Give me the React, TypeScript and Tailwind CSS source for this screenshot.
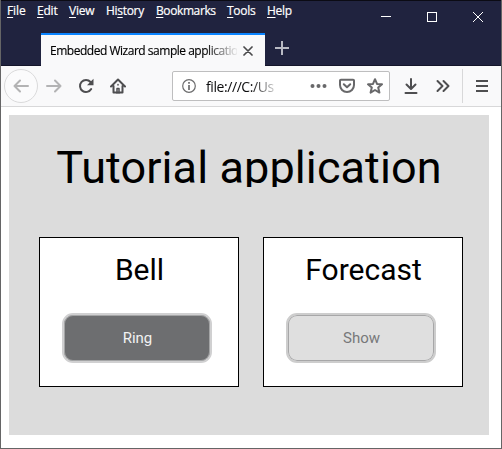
import React from "react";

type MenuEntry = { before: string; key: string; after: string; box: string };

const menu: MenuEntry[] = [
  { before: "", key: "F", after: "ile", box: "w-[30px] tracking-[-0.1px]" },
  { before: "", key: "E", after: "dit", box: "w-8 tracking-[-0.2px]" },
  { before: "", key: "V", after: "iew", box: "w-[37px] tracking-[-0.2px]" },
  { before: "Hi", key: "s", after: "tory", box: "w-[50px] tracking-[-0.3px]" },
  { before: "", key: "B", after: "ookmarks", box: "w-[71px] tracking-[-0.4px]" },
  { before: "", key: "T", after: "ools", box: "w-10 tracking-[-0.3px]" },
  { before: "", key: "H", after: "elp", box: "w-9 tracking-[-0.3px]" },
];

function Icon({ className, children }: { className: string; children: React.ReactNode }) {
  return (
    <svg
      viewBox="0 0 16 16"
      className={`h-4 w-4 shrink-0 ${className}`}
      fill="none"
      stroke="currentColor"
      strokeWidth="2"
      strokeLinecap="round"
      strokeLinejoin="round"
    >
      {children}
    </svg>
  );
}

function TitleBar() {
  return (
    <header className="flex h-[66px] flex-col border-t border-b border-t-[#0b0b14] border-b-[#14152a] bg-[#20233f] text-white">
      <div className="flex h-8 justify-between">
        <nav className="ml-[6px] flex pt-[2px] text-[12px] leading-4 whitespace-nowrap [-webkit-text-stroke:0.2px_white]">
          {menu.map((m) => (
            <span key={m.key} className={m.box}>
              {m.before}
              <span className="underline underline-offset-2">{m.key}</span>
              {m.after}
            </span>
          ))}
        </nav>
        <svg className="mr-[16px] h-8 w-[104px]" viewBox="0 0 104 32" fill="none" stroke="white" shapeRendering="crispEdges">
          <path d="M0 15.500h10M46.500 11.500h9v9h-9z" />
          <path d="M92 11l10 10M102 11l-10 10" shapeRendering="auto" />
        </svg>
      </div>
      <div className="flex h-8">
        <div className="ml-[40px] flex h-[33px] w-[224px] shrink-0 items-center border-t-2 border-[#0a84ff] bg-[#f9f9fa] pl-[9px] text-black">
          <span className="w-[187px] overflow-hidden text-[12px] leading-4 tracking-[-0.48px] whitespace-nowrap [mask-image:linear-gradient(to_right,black_155px,transparent_189px)] [-webkit-text-stroke:0.15px_black]">
            Embedded Wizard sample application
          </span>
          <svg viewBox="0 0 10 10" className="ml-[6px] h-[10px] w-[10px] shrink-0" stroke="#4a4a4c" strokeWidth="1.700" strokeLinecap="round">
            <path d="M1 1l8 8M9 1l-8 8" />
          </svg>
        </div>
        <svg viewBox="0 0 14 14" className="mt-[8px] ml-[10px] h-[14px] w-[14px]" stroke="#b9bac4" strokeWidth="2">
          <path d="M7 0v14M0 7h14" />
        </svg>
      </div>
    </header>
  );
}

function Toolbar() {
  return (
    <div className="flex h-[41px] items-center border-b border-[#d8d8d9] bg-[#f9f9fa] text-[#4e4e50]">
      <div className="ml-[3px] flex h-[34px] w-[34px] shrink-0 items-center justify-center rounded-full border border-[#dadadb] bg-[#fbfbfc] text-[#b3b3b4]">
        <Icon className="">
          <path d="M15 8H1.500M7 2.500L1.500 8L7 13.500" />
        </Icon>
      </div>
      <Icon className="ml-2 text-[#b3b3b4]">
        <path d="M1 8h13.500M9 2.500L14.500 8L9 13.500" />
      </Icon>
      <Icon className="ml-4">
        <path d="M13.200 11A6 6 0 1 1 12.500 4" />
        <path d="M15.500 .8V7.200H9z" fill="currentColor" stroke="none" />
      </Icon>
      <Icon className="ml-4">
        <path d="M1 8.500L8 1.500l7 7M3.500 8v6.500h9V8" />
        <path d="M7 15v-4.500h2V15" strokeWidth="1.500" />
        <path d="M8 6.500v.5" strokeWidth="1.500" />
      </Icon>
      <div className="ml-[46px] flex h-[30px] w-[218px] shrink-0 items-center rounded-[2px] border border-[#bebebf] bg-white">
        <svg viewBox="0 0 14 14" className="ml-[9px] h-[14px] w-[14px] shrink-0" fill="none" stroke="#6c6c6d">
          <circle cx="7" cy="7" r="6.300" strokeWidth="1.200" />
          <path d="M7 6v5M7 3v1.700" strokeWidth="1.700" />
        </svg>
        <span className="mt-[2px] ml-[10px] w-[69px] overflow-hidden text-[14px] leading-5 tracking-[-0.42px] whitespace-nowrap text-[#0c0c0d] [mask-image:linear-gradient(to_right,black_45px,transparent_74px)]">
          file:///C:/Us
        </span>
        <svg viewBox="0 0 18 4" className="ml-[35px] h-1 w-[18px] shrink-0" fill="#68686a">
          <circle cx="2.500" cy="2" r="2" />
          <circle cx="8.500" cy="2" r="2" />
          <circle cx="14.500" cy="2" r="2" />
        </svg>
        <Icon className="ml-[11px] text-[#68686a]">
          <path d="M1.900 1.700h12.200q.9 0 .9.900V7A7 7 0 0 1 1 7V2.600Q1 1.700 1.900 1.700z" />
          <path d="M4.800 6.200L8 9.200l3.200-3" />
        </Icon>
        <Icon className="ml-3 text-[#68686a]">
          <path d="M8 1.200l2 4.700 5 .4-3.800 3.300 1.200 5L8 12l-4.400 2.600 1.200-5L1 6.300l5-.4z" />
        </Icon>
      </div>
      <Icon className="ml-[13px]">
        <path d="M8 1v9.500M3.500 6.500L8 11l4.500-4.500M2.500 15h11" />
      </Icon>
      <Icon className="ml-4">
        <path d="M2.500 3l5 5-5 5M8.500 3l5 5-5 5" />
      </Icon>
      <div className="ml-[11px] h-[34px] w-px bg-[#d8d8d9]" />
      <Icon className="ml-[11px]">
        <path d="M2 3h12M2 8h12M2 13h12" strokeLinecap="butt" />
      </Icon>
    </div>
  );
}

function Card({ title, children }: { title: string; children: React.ReactNode }) {
  return (
    <section className="flex h-[150px] w-[200px] flex-col items-center border border-black bg-white">
      <h2 className="mt-[14px] ml-px h-9 text-[30px] leading-9">{title}</h2>
      {children}
    </section>
  );
}

export default function App() {
  return (
    <div className="flex h-[449px] w-[502px] flex-col overflow-hidden border-r border-b border-l border-[#656566] bg-white font-['Open_Sans','Noto_Sans',sans-serif]">
      <TitleBar />
      <Toolbar />
      <main className="mt-2 ml-2 h-[320px] w-[480px] bg-[#dcdcdc] font-[Roboto,sans-serif] text-black">
        <h1 className="h-[72px] overflow-hidden pt-[26px] text-center text-[45px] leading-[54px] tracking-[0.1px] whitespace-nowrap">
          Tutorial application
        </h1>
        <div className="mt-[50px] ml-[30px] flex gap-6">
          <Card title="Bell">
            <button className="mt-[25px] mr-[4px] h-[50px] w-[150px] rounded-[11px] border-2 border-[#d0d0d1] bg-[#6d6e70] pl-px text-[15px] text-[#f2f2f2] shadow-[inset_0_0_0_1px_#a4a5a6]">
              Ring
            </button>
          </Card>
          <Card title="Forecast">
            <button className="mt-[25px] mr-[4px] h-[50px] w-[150px] rounded-[11px] border-2 border-[#cdcdcd] bg-[#dfdfdf] pl-px text-[15px] text-[#77787a] shadow-[inset_0_0_0_1px_#a7a7a8]">
              Show
            </button>
          </Card>
        </div>
      </main>
    </div>
  );
}
